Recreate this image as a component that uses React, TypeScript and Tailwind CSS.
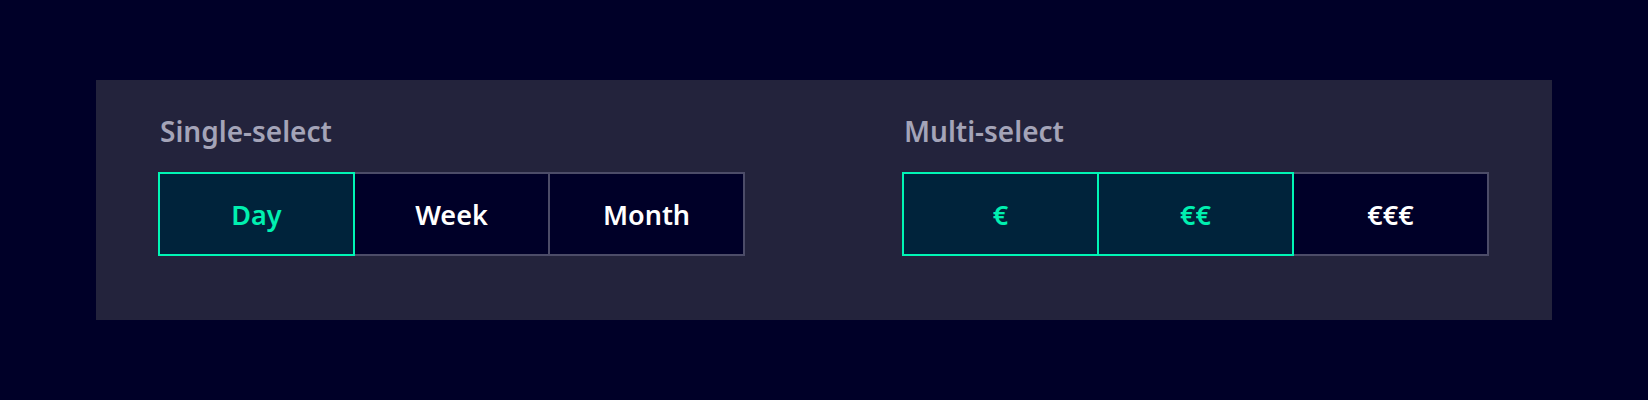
const font = { fontFamily: '"Noto Sans", "Open Sans", sans-serif' };

type Option = { label: string; selected: boolean };

const single: Option[] = [
  { label: 'Day', selected: true },
  { label: 'Week', selected: false },
  { label: 'Month', selected: false },
];

const multi: Option[] = [
  { label: '€', selected: true },
  { label: '€€', selected: true },
  { label: '€€€', selected: false },
];

const ButtonGroup = ({ title, options }: { title: string; options: Option[] }) => (
  <div className="flex flex-col w-[588px]">
    <div className="pl-[2px] text-[28px] leading-[36px] font-semibold text-[#a4a4b8]">{title}</div>
    <div className="flex mt-[23px]">
      {options.map((opt, i) => (
        <button
          key={opt.label}
          className={
            'relative flex items-center justify-center w-[197px] h-[84px] border-2 text-[27px] font-semibold pt-[2px] ' +
            (i > 0 ? '-ml-[2px] ' : '') +
            (opt.selected
              ? 'z-10 bg-[#00233b] border-[#00f5b5] text-[#00f0b0]'
              : 'bg-[#000028] border-[#4c4c68] text-white')
          }
        >
          {opt.label}
        </button>
      ))}
    </div>
  </div>
);

export default function App() {
  return (
    <div className="w-[1648px] h-[400px] bg-[#000028] pt-[80px] pl-[96px]" style={font}>
      <div className="w-[1456px] h-[240px] bg-[#23233c] pt-[33px] px-[62px] flex gap-[156px]">
        <ButtonGroup title="Single-select" options={single} />
        <ButtonGroup title="Multi-select" options={multi} />
      </div>
    </div>
  );
}
